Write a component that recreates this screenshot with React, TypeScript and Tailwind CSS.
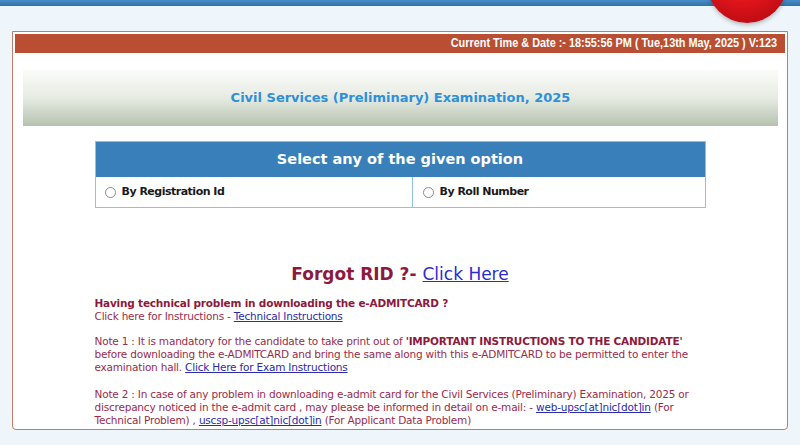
import React from 'react';

const verdana = { fontFamily: '"DejaVu Sans", Verdana, sans-serif' };

export default function App() {
  return (
    <div
      className="relative w-full h-[445px] overflow-hidden bg-[#eef6fc] font-['DejaVu_Sans',Verdana,sans-serif]"
    >
      {/* top band */}
      <div className="h-[6px] bg-gradient-to-b from-[#4a8cc4] to-[#2f73ad]" />
      {/* red ball */}
      <div className="absolute left-[707px] top-[-57px] w-[80px] h-[80px] rounded-full bg-[radial-gradient(circle_at_45%_35%,#ff4a4a_0%,#e0141b_45%,#a8070d_100%)] shadow-[0_2px_4px_rgba(0,0,0,0.25)]" />

      <div className="mx-[12px] mt-[25px] border border-[#c57a68] rounded-b-[4px] bg-white p-[2px] pb-0 h-[399px]">
        <div className="h-[19px] bg-[#b94e33] flex items-center justify-end pr-[8px] text-white overflow-hidden">
          <span className="inline-block origin-right scale-x-[0.87] whitespace-nowrap text-[12.5px] font-bold font-['Liberation_Sans',Arial,sans-serif]">
            Current Time &amp; Date :- 18:55:56 PM ( Tue,13th May, 2025 ) V:123
          </span>
        </div>

        <div className="ml-[8px] mr-[7px] mt-[17px] h-[56px] bg-gradient-to-b from-[#fbfcfa] via-[#e6ebe2] to-[#b6c2b0] flex items-center justify-center">
          <span className="text-[#2f8fd8] font-bold text-[13px]">
            Civil Services (Preliminary) Examination, 2025
          </span>
        </div>

        <div className="mx-auto w-[611px] mt-[15px] border border-[#8cc4de]">
          <div className="h-[35px] bg-[#397fb9] flex items-center justify-center text-white font-bold text-[14.5px]">
            Select any of the given option
          </div>
          <div className="flex h-[30px] text-[11px] tracking-[-0.5px] font-bold text-[#1a1a1a]">
            <label className="w-[317px] flex items-center pl-[9px] gap-[6px] border-r border-[#8cc4de]">
              <span className="w-[11px] h-[11px] rounded-full border border-[#8a8a8a] bg-white" />
              By Registration Id
            </label>
            <label className="flex-1 flex items-center pl-[10px] gap-[6px]">
              <span className="w-[11px] h-[11px] rounded-full border border-[#8a8a8a] bg-white" />
              By Roll Number
            </label>
          </div>
        </div>

        <div className="mt-[55px] text-center text-[17px] leading-[22px]">
          <span className="font-bold text-[#8c1a3e]">Forgot RID ?- </span>
          <a href="#" className="text-[#2b2bd0] underline">Click Here</a>
        </div>

        <div
          className="mx-auto w-[611px] mt-[12px] text-[10.5px] leading-[13px] tracking-[-0.2px] text-[#9a2c4c]"
          style={verdana}
        >
          <p className="font-bold text-[#8c1a3e]">Having technical problem in downloading the e-ADMITCARD ?</p>
          <p>
            Click here for Instructions - <a href="#" className="text-[#2b2bb0] underline">Technical Instructions</a>
          </p>
          <p className="mt-[12px]">
            Note 1 : It is mandatory for the candidate to take print out of{' '}
            <b className="text-[#8c1a3e]">'IMPORTANT INSTRUCTIONS TO THE CANDIDATE'</b> before downloading the
            e-ADMITCARD and bring the same along with this e-ADMITCARD to be permitted to enter the examination
            hall. <a href="#" className="text-[#2b2bb0] underline">Click Here for Exam Instructions</a>
          </p>
          <p className="mt-[14px]">
            Note 2 : In case of any problem in downloading e-admit card for the Civil Services (Preliminary)
            Examination, 2025 or discrepancy noticed in the e-admit card , may please be informed in detail on
            e-mail: - <a href="#" className="text-[#2b2bb0] underline">web-upsc[at]nic[dot]in</a> (For Technical
            Problem) , <a href="#" className="text-[#2b2bb0] underline">uscsp-upsc[at]nic[dot]in</a> (For
            Applicant Data Problem)
          </p>
        </div>
      </div>
    </div>
  );
}
